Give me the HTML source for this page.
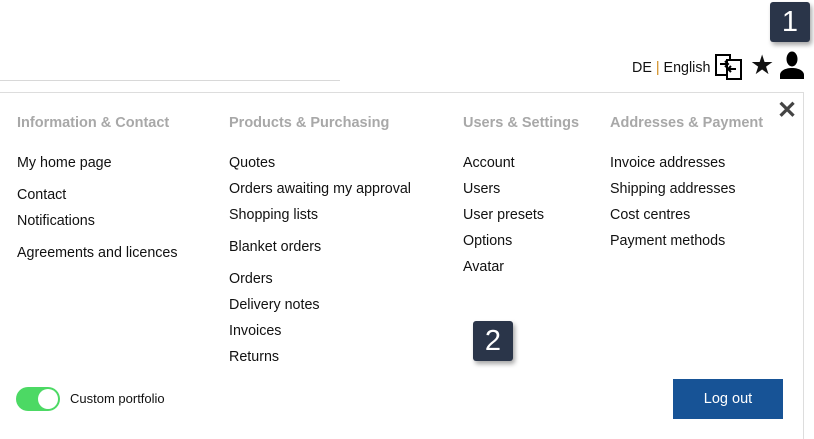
<!DOCTYPE html>
<html><head><style>
body{margin:0;width:814px;height:438px;overflow:hidden;background:#fff;font-family:"Liberation Sans",sans-serif;position:relative;color:#111}
.a{position:absolute;white-space:nowrap}
.h{font-weight:bold;color:#a8a8a8;font-size:14.5px;top:115px}
.i{font-size:14.3px;margin-top:2px}
.badge{position:absolute;width:40px;height:40px;background:#2a3549;color:#fff;border-radius:3px;font-size:29px;text-align:center;line-height:40px;box-shadow:2px 3px 5px rgba(0,0,0,.35)}
</style></head><body>
<div class="a" style="left:0;top:80px;width:340px;height:1px;background:#d8d8d8"></div>
<div class="a" style="left:0;top:92px;width:803px;height:346px;border-top:1px solid #ddd;border-right:1px solid #ddd"></div>
<div class="badge" style="left:770px;top:2px">1</div>
<div class="badge" style="left:473px;top:321px">2</div>
<div class="a i" style="left:632px;top:58px">DE <span style="color:#d08a1a">|</span> English</div>
<svg class="a" style="left:715px;top:54px" width="28" height="26" viewBox="0 0 28 26"><rect x="1" y="1" width="14" height="20" fill="#fff" stroke="#000" stroke-width="2"/><rect x="12" y="6" width="14" height="19" fill="#fff" stroke="#000" stroke-width="2"/><path d="M5 10h8M10 7l3 3-3 3M21 15h-8M16 12l-3 3 3 3" stroke="#000" stroke-width="2" fill="none"/></svg>
<div class="a" style="left:750px;top:50px;font-size:27px">★</div>
<svg class="a" style="left:780px;top:51px" width="24" height="28" viewBox="0 0 24 28"><ellipse cx="12" cy="8" rx="5.5" ry="7.5"/><path d="M0 28v-4c0-4 5-7 12-7s12 3 12 7v4z"/></svg>
<div class="a" style="left:777px;top:96px;font-size:24px;color:#444;font-weight:bold">✕</div>
<div class="a h" style="left:17px">Information &amp; Contact</div>
<div class="a h" style="left:229px">Products &amp; Purchasing</div>
<div class="a h" style="left:463px">Users &amp; Settings</div>
<div class="a h" style="left:610px">Addresses &amp; Payment</div>
<div class="a i" style="left:17px;top:153px">My home page</div>
<div class="a i" style="left:17px;top:185px">Contact</div>
<div class="a i" style="left:17px;top:211px">Notifications</div>
<div class="a i" style="left:17px;top:243px">Agreements and licences</div>
<div class="a i" style="left:229px;top:153px">Quotes</div>
<div class="a i" style="left:229px;top:179px">Orders awaiting my approval</div>
<div class="a i" style="left:229px;top:205px">Shopping lists</div>
<div class="a i" style="left:229px;top:237px">Blanket orders</div>
<div class="a i" style="left:229px;top:269px">Orders</div>
<div class="a i" style="left:229px;top:295px">Delivery notes</div>
<div class="a i" style="left:229px;top:321px">Invoices</div>
<div class="a i" style="left:229px;top:347px">Returns</div>
<div class="a i" style="left:463px;top:153px">Account</div>
<div class="a i" style="left:463px;top:179px">Users</div>
<div class="a i" style="left:463px;top:205px">User presets</div>
<div class="a i" style="left:463px;top:231px">Options</div>
<div class="a i" style="left:463px;top:257px">Avatar</div>
<div class="a i" style="left:610px;top:153px">Invoice addresses</div>
<div class="a i" style="left:610px;top:179px">Shipping addresses</div>
<div class="a i" style="left:610px;top:205px">Cost centres</div>
<div class="a i" style="left:610px;top:231px">Payment methods</div>
<div class="a" style="left:16px;top:387px;width:44px;height:24px;border-radius:12px;background:#4cd964"></div>
<div class="a" style="left:38px;top:389px;width:20px;height:20px;border-radius:10px;background:#fff"></div>
<div class="a" style="left:70px;top:391px;font-size:13px">Custom portfolio</div>
<div class="a" style="left:673px;top:379px;width:110px;height:40px;background:#175396;color:#fff;font-size:14.5px;text-align:center;line-height:40px">Log out</div>
</body></html>
